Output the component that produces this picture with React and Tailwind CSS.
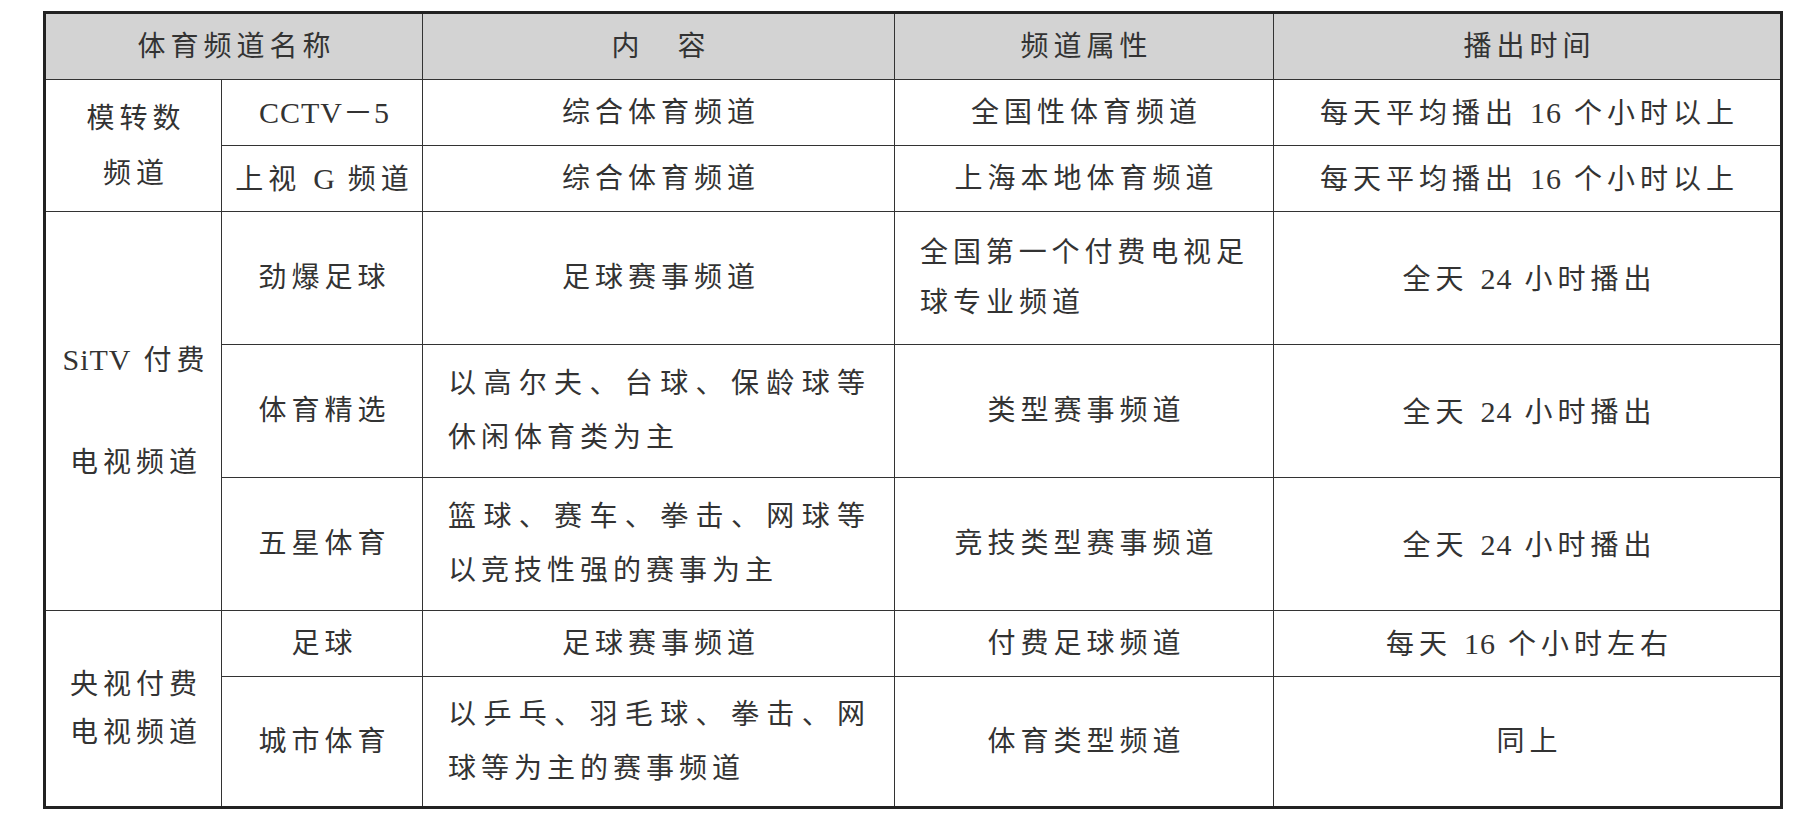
import React from "react";

const font = "font-['Liberation_Serif','Noto_Sans_CJK_SC',serif]";

const cell = "border-[1.5px] border-[#333] align-middle p-0";

// latin runs in the table are not letter-spaced like the chinese text
const L = ({ children }) => <span className="text-[30px] tracking-[1px]">{children}</span>;

const Center = ({ children }) => (
  <div className="text-center tracking-[5px] pl-[5px]">{children}</div>
);

// two-line cell: first line stretched edge to edge, second line left
const Para = ({ lines, lh = "leading-[54px]" }) => (
  <div className={`px-[25px] tracking-[5px] ${lh}`}>
    <div className="text-justify [text-align-last:justify] tracking-[4px]">{lines[0]}</div>
    <div className="text-left">{lines[1]}</div>
  </div>
);

const App = () => {
  return (
    <div className={`w-[1797px] h-[826px] bg-white pt-[11px] pl-[43px] ${font} text-[28px] text-[#333]`}>
      <table className="table-fixed border-collapse border-[3px] border-[#222] w-[1737px]">
        <colgroup>
          <col className="w-[177px]" />
          <col className="w-[201px]" />
          <col className="w-[472px]" />
          <col className="w-[379px]" />
          <col className="w-[508px]" />
        </colgroup>
        <tbody>
          <tr className="h-[67px] bg-[#d3d3d3]">
            <td colSpan={2} className={cell}>
              <Center>体育频道名称</Center>
            </td>
            <td className={cell}>
              <Center>内　容</Center>
            </td>
            <td className={cell}>
              <Center>频道属性</Center>
            </td>
            <td className={cell}>
              <Center>播出时间</Center>
            </td>
          </tr>

          <tr className="h-[66px]">
            <td rowSpan={2} className={cell}>
              <div className="text-center tracking-[5px] pl-[5px] leading-[55px]">
                <div>模转数</div>
                <div>频道</div>
              </div>
            </td>
            <td className={cell}>
              <Center>
                <L>CCTV－5</L>
              </Center>
            </td>
            <td className={cell}>
              <Center>综合体育频道</Center>
            </td>
            <td className={cell}>
              <Center>全国性体育频道</Center>
            </td>
            <td className={cell}>
              <Center>
                每天平均播出 <L>16</L> 个小时以上
              </Center>
            </td>
          </tr>
          <tr className="h-[66px]">
            <td className={cell}>
              <Center>
                上视 <L>G</L> 频道
              </Center>
            </td>
            <td className={cell}>
              <Center>综合体育频道</Center>
            </td>
            <td className={cell}>
              <Center>上海本地体育频道</Center>
            </td>
            <td className={cell}>
              <Center>
                每天平均播出 <L>16</L> 个小时以上
              </Center>
            </td>
          </tr>

          <tr className="h-[133px]">
            <td rowSpan={3} className={cell}>
              <div className="flex flex-col items-center gap-[62px] tracking-[5px] pl-[5px] leading-[40px]">
                <div>
                  <L>SiTV</L> 付费
                </div>
                <div>电视频道</div>
              </div>
            </td>
            <td className={cell}>
              <Center>劲爆足球</Center>
            </td>
            <td className={cell}>
              <Center>足球赛事频道</Center>
            </td>
            <td className={cell}>
              <Para lines={["全国第一个付费电视足", "球专业频道"]} lh="leading-[50px]" />
            </td>
            <td className={cell}>
              <Center>
                全天 <L>24</L> 小时播出
              </Center>
            </td>
          </tr>
          <tr className="h-[133px]">
            <td className={cell}>
              <Center>体育精选</Center>
            </td>
            <td className={cell}>
              <Para lines={["以高尔夫、台球、保龄球等", "休闲体育类为主"]} />
            </td>
            <td className={cell}>
              <Center>类型赛事频道</Center>
            </td>
            <td className={cell}>
              <Center>
                全天 <L>24</L> 小时播出
              </Center>
            </td>
          </tr>
          <tr className="h-[133px]">
            <td className={cell}>
              <Center>五星体育</Center>
            </td>
            <td className={cell}>
              <Para lines={["篮球、赛车、拳击、网球等", "以竞技性强的赛事为主"]} />
            </td>
            <td className={cell}>
              <Center>竞技类型赛事频道</Center>
            </td>
            <td className={cell}>
              <Center>
                全天 <L>24</L> 小时播出
              </Center>
            </td>
          </tr>

          <tr className="h-[66px]">
            <td rowSpan={2} className={cell}>
              <div className="text-center tracking-[5px] pl-[5px] leading-[48px]">
                <div>央视付费</div>
                <div>电视频道</div>
              </div>
            </td>
            <td className={cell}>
              <Center>足球</Center>
            </td>
            <td className={cell}>
              <Center>足球赛事频道</Center>
            </td>
            <td className={cell}>
              <Center>付费足球频道</Center>
            </td>
            <td className={cell}>
              <Center>
                每天 <L>16</L> 个小时左右
              </Center>
            </td>
          </tr>
          <tr className="h-[131px]">
            <td className={cell}>
              <Center>城市体育</Center>
            </td>
            <td className={cell}>
              <Para lines={["以乒乓、羽毛球、拳击、网", "球等为主的赛事频道"]} />
            </td>
            <td className={cell}>
              <Center>体育类型频道</Center>
            </td>
            <td className={cell}>
              <Center>同上</Center>
            </td>
          </tr>
        </tbody>
      </table>
    </div>
  );
};

export default App;
